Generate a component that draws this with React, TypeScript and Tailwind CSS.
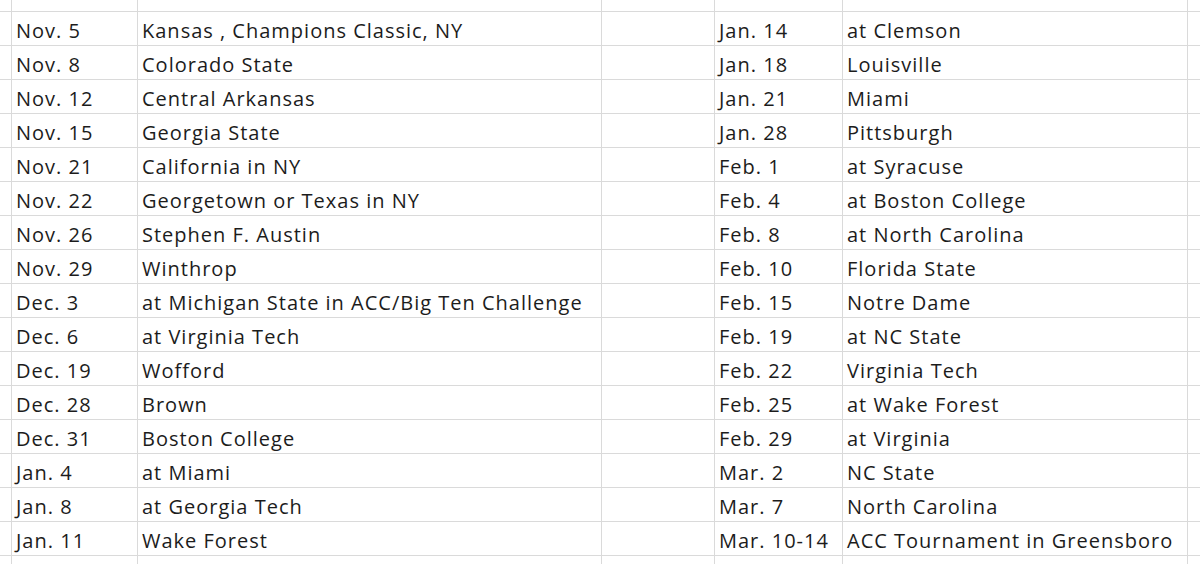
import React from "react";

const left: [string, string][] = [
  ["Nov. 5", "Kansas , Champions Classic, NY"],
  ["Nov. 8", "Colorado State"],
  ["Nov. 12", "Central Arkansas"],
  ["Nov. 15", "Georgia State"],
  ["Nov. 21", "California in NY"],
  ["Nov. 22", "Georgetown or Texas in NY"],
  ["Nov. 26", "Stephen F. Austin"],
  ["Nov. 29", "Winthrop"],
  ["Dec. 3", "at Michigan State in ACC/Big Ten Challenge"],
  ["Dec. 6", "at Virginia Tech"],
  ["Dec. 19", "Wofford"],
  ["Dec. 28", "Brown"],
  ["Dec. 31", "Boston College"],
  ["Jan. 4", "at Miami"],
  ["Jan. 8", "at Georgia Tech"],
  ["Jan. 11", "Wake Forest"],
];

const right: [string, string][] = [
  ["Jan. 14", "at Clemson"],
  ["Jan. 18", "Louisville"],
  ["Jan. 21", "Miami"],
  ["Jan. 28", "Pittsburgh"],
  ["Feb. 1", "at Syracuse"],
  ["Feb. 4", "at Boston College"],
  ["Feb. 8", "at North Carolina"],
  ["Feb. 10", "Florida State"],
  ["Feb. 15", "Notre Dame"],
  ["Feb. 19", "at NC State"],
  ["Feb. 22", "Virginia Tech"],
  ["Feb. 25", "at Wake Forest"],
  ["Feb. 29", "at Virginia"],
  ["Mar. 2", "NC State"],
  ["Mar. 7", "North Carolina"],
  ["Mar. 10-14", "ACC Tournament in Greensboro"],
];

function Cell({ text }: { text?: string }) {
  return (
    <div className="bg-white flex items-center pl-1 pt-[4px] whitespace-nowrap overflow-visible text-[#1c1c1c] text-[20px] leading-none tracking-[1px]">
      {text ?? ""}
    </div>
  );
}

export default function App() {
  const rows: (string | undefined)[][] = [];
  rows.push([undefined, undefined, undefined, undefined, undefined, undefined, undefined]);
  for (let i = 0; i < 16; i++) {
    rows.push([undefined, left[i][0], left[i][1], undefined, right[i][0], right[i][1], undefined]);
  }
  rows.push([undefined, undefined, undefined, undefined, undefined, undefined, undefined]);
  return (
    <div
      className="w-[1200px] h-[564px] overflow-hidden bg-white"
      style={{ fontFamily: "'Open Sans', Lato, sans-serif" }}
    >
      <div className="grid gap-px bg-[#dadada] grid-cols-[11px_125px_463px_112px_127px_344px_13px] grid-rows-[11px_repeat(16,33px)_8px]">
        {rows.map((r, ri) =>
          r.map((c, ci) => <Cell key={`${ri}-${ci}`} text={c} />)
        )}
      </div>
    </div>
  );
}
